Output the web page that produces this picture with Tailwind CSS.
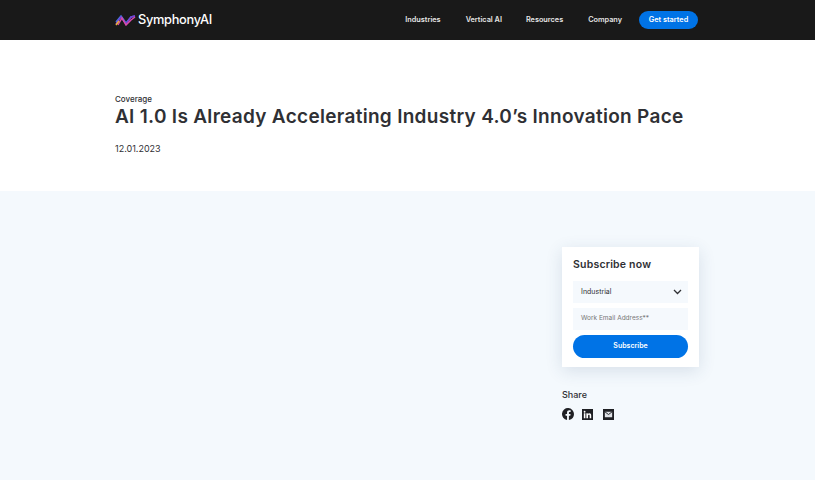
<!DOCTYPE html>
<html lang="en">
<head>
    <meta charset="UTF-8">
    <title>AI 1.0 Is Already Accelerating Industry 4.0's Innovation Pace</title>
    <script src="https://cdn.jsdelivr.net/npm/@tailwindcss/browser@4"></script>
</head>
<body class="bg-white text-[#2f3034] font-['Inter',sans-serif] h-[480px] overflow-hidden">

    <!-- nav -->
    <header class="bg-[#191919] h-10 pl-[115px] pr-[117px] flex items-center justify-between">
        <a class="flex items-center gap-[2px]">
            <svg width="21" height="12" viewBox="0 0 21 12" fill="none" stroke-width="1.5">
                <path d="M1 8L6 2l5 7 5-6 4-1" stroke="#3f7be0"/>
                <path d="M1 10L6 3l5 7 5-7 4-1" stroke="#7a3fd6"/>
                <path d="M3 11L7 4l4 7 5-5 4-3" stroke="#d94aa8"/>
                <path d="M1 11l3-4" stroke="#e9b23c"/>
            </svg>
            <span class="text-white text-[12.8px] font-medium tracking-[-0.3px]">SymphonyAI</span>
        </a>
        <nav class="flex items-center text-[#e6e6e6] text-[7.3px] font-semibold">
            <a>Industries</a>
            <a class="ml-[25px]">Vertical AI</a>
            <a class="ml-[24px]">Resources</a>
            <a class="ml-[25px]">Company</a>
            <a class="ml-[17px] bg-[#0073e6] text-white rounded-full w-[59px] h-[18px] flex items-center justify-center">Get started</a>
        </nav>
    </header>

    <!-- title -->
    <section class="h-[151px] pl-[115px] pt-[54px]">
        <p class="text-[8px] font-medium leading-[10px]">Coverage</p>
        <h1 class="text-[19px] font-semibold leading-[24px] tracking-[0.3px] mt-px">AI 1.0 Is Already Accelerating Industry 4.0’s Innovation Pace</h1>
        <p class="text-[9px] leading-[12px] mt-[14px]">12.01.2023</p>
    </section>

    <!-- body -->
    <main class="bg-[#f4f9fd] h-[289px] pl-[562px] pt-[56px]">
        <div class="bg-white w-[137px] h-[120px] px-[11px] pt-[11px] shadow-[0_4px_16px_rgba(40,70,110,0.14)]">
            <h2 class="text-[10.5px] font-semibold leading-[14px] tracking-[0.2px]">Subscribe now</h2>
            <div class="bg-[#f5f9fd] h-[22px] mt-[9px] pl-2 pr-[6px] flex items-center justify-between text-[7px]">
                <span>Industrial</span>
                <svg width="9" height="6" viewBox="0 0 9 6" fill="none" stroke="#2f3034" stroke-width="1.3"><path d="M1 1l3.5 3.5L8 1"/></svg>
            </div>
            <div class="bg-[#f5f9fd] h-[22px] mt-[5px] pl-2 flex items-center text-[6.5px] text-[#777]">Work Email Address**</div>
            <button class="bg-[#0073e6] text-white w-full h-[23px] mt-[4px] rounded-full text-[7px] font-semibold">Subscribe</button>
        </div>

        <p class="text-[9px] font-medium leading-[12px] mt-[22px]">Share</p>
        <div class="flex items-center gap-[8px] mt-[7px]">
            <svg width="12" height="12" viewBox="0 0 24 24" fill="#1f2024"><path d="M24 12a12 12 0 1 0-13.9 11.9v-8.4H7.1V12h3V9.4c0-3 1.8-4.7 4.5-4.7 1.3 0 2.7.2 2.7.2v3h-1.5c-1.5 0-2 .9-2 1.9V12h3.3l-.5 3.5h-2.8v8.4A12 12 0 0 0 24 12z"/></svg>
            <svg width="11" height="11" viewBox="0 0 24 24"><rect width="24" height="24" fill="#1f2024"/><path fill="#fff" d="M4 9.5h3.4V20H4zM5.7 4a2 2 0 1 1 0 4 2 2 0 0 1 0-4zM9.5 9.5h3.2V11c.5-.9 1.6-1.8 3.3-1.8 3.5 0 4.1 2.3 4.1 5.3V20h-3.4v-4.9c0-1.2 0-2.7-1.6-2.7s-1.9 1.300-1.900 2.600v5H9.500z"/></svg>
            <svg class="ml-[2px]" width="11" height="11" viewBox="0 0 24 24"><rect width="24" height="24" fill="#1f2024"/><path d="M4 6h16v12H4z" fill="#dfe2e6"/><path d="M4 6l8 6 8-6" fill="none" stroke="#1f2024" stroke-width="2"/></svg>
        </div>
    </main>

</body>
</html>
